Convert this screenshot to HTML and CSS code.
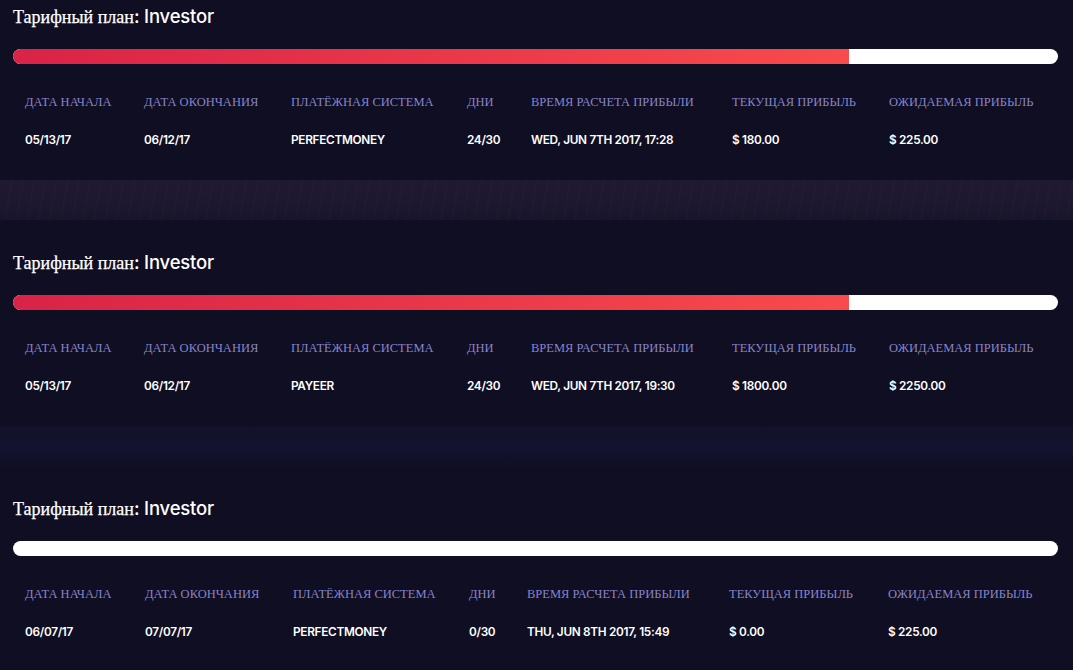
FILE: index.html
```html
<!DOCTYPE html>
<html lang="ru">
<head>
<meta charset="utf-8">
<title>Депозиты</title>
<link rel="stylesheet" href="styles.css">
</head>
<body>
<div class="page">
  <section class="card">
    <h2 class="title"><span class="ru">Тарифный план</span>: Investor</h2>
    <div class="bar"><div class="fill" style="width:80%"></div></div>
    <div class="grid">
      <div class="lbl">Дата начала</div>
      <div class="lbl">Дата окончания</div>
      <div class="lbl">Платёжная система</div>
      <div class="lbl">Дни</div>
      <div class="lbl">Время расчета прибыли</div>
      <div class="lbl">Текущая прибыль</div>
      <div class="lbl">Ожидаемая прибыль</div>
      <div class="val">05/13/17</div>
      <div class="val">06/12/17</div>
      <div class="val">PerfectMoney</div>
      <div class="val">24/30</div>
      <div class="val">Wed, Jun 7th 2017, 17:28</div>
      <div class="val">$ 180.00</div>
      <div class="val">$ 225.00</div>
    </div>
  </section>
  <div class="gap gap-violet"></div>
  <section class="card">
    <h2 class="title"><span class="ru">Тарифный план</span>: Investor</h2>
    <div class="bar"><div class="fill" style="width:80%"></div></div>
    <div class="grid">
      <div class="lbl">Дата начала</div>
      <div class="lbl">Дата окончания</div>
      <div class="lbl">Платёжная система</div>
      <div class="lbl">Дни</div>
      <div class="lbl">Время расчета прибыли</div>
      <div class="lbl">Текущая прибыль</div>
      <div class="lbl">Ожидаемая прибыль</div>
      <div class="val">05/13/17</div>
      <div class="val">06/12/17</div>
      <div class="val">Payeer</div>
      <div class="val">24/30</div>
      <div class="val">Wed, Jun 7th 2017, 19:30</div>
      <div class="val">$ 1800.00</div>
      <div class="val">$ 2250.00</div>
    </div>
  </section>
  <div class="gap gap-blue"></div>
  <section class="card">
    <h2 class="title"><span class="ru">Тарифный план</span>: Investor</h2>
    <div class="bar"><div class="fill" style="width:0%"></div></div>
    <div class="grid grid-alt">
      <div class="lbl">Дата начала</div>
      <div class="lbl">Дата окончания</div>
      <div class="lbl">Платёжная система</div>
      <div class="lbl">Дни</div>
      <div class="lbl">Время расчета прибыли</div>
      <div class="lbl">Текущая прибыль</div>
      <div class="lbl">Ожидаемая прибыль</div>
      <div class="val">06/07/17</div>
      <div class="val">07/07/17</div>
      <div class="val">PerfectMoney</div>
      <div class="val">0/30</div>
      <div class="val">Thu, Jun 8th 2017, 15:49</div>
      <div class="val">$ 0.00</div>
      <div class="val">$ 225.00</div>
    </div>
  </section>
</div>
</body>
</html>
```

FILE: styles.css
```css
html, body {
  margin: 0;
  padding: 0;
  background: #0f0e22;
}

body {
  overflow: hidden;
  font-family: Inter, "Liberation Sans", sans-serif;
  color: #ffffff;
}

.page {
  margin-top: -26px;
}

.card {
  background: #0f0e22;
  padding: 30px 15px 32px 13px;
}

.title {
  margin: 0;
  height: 24px;
  font-family: Inter, "Liberation Sans", sans-serif;
  font-weight: 500;
  font-size: 18.5px;
  line-height: 24px;
  color: #ffffff;
  letter-spacing: -0.2px;
  white-space: nowrap;
}

.title .ru {
  font-family: "Liberation Serif", "DejaVu Serif", serif;
  font-size: 18px;
  font-weight: 400;
  letter-spacing: 0;
  -webkit-text-stroke: 0.25px #ffffff;
}

.bar {
  margin-top: 21px;
  height: 15px;
  background: #ffffff;
  border-radius: 8px;
  overflow: hidden;
}

.fill {
  height: 100%;
  background: linear-gradient(90deg, #d92347 0%, #f84b4c 100%);
}

.grid {
  display: grid;
  grid-template-columns: 119px 147px 176px 64px 201px 157px 1fr;
  grid-auto-rows: 16px;
  row-gap: 22px;
  margin-top: 30px;
  padding-left: 12px;
}

.grid-alt {
  grid-template-columns: 120px 148px 176px 58px 202px 159px 1fr;
}

.lbl {
  font-family: "Liberation Serif", "DejaVu Serif", serif;
  text-transform: uppercase;
  font-size: 12.5px;
  line-height: 16px;
  color: #8884c9;
  white-space: nowrap;
}

.val {
  font-family: Inter, "Liberation Sans", sans-serif;
  text-transform: uppercase;
  font-weight: 600;
  font-size: 11.8px;
  line-height: 16px;
  color: #ffffff;
  white-space: nowrap;
  letter-spacing: -0.3px;
}

.gap {
  height: 40px;
}

.gap-violet {
  background:
    repeating-linear-gradient(100deg, rgba(130, 80, 120, 0.03) 0 2px, transparent 2px 11px),
    linear-gradient(180deg, #1f1a30 0%, #1d1830 55%, #18152b 100%);
}

.gap-blue {
  background: linear-gradient(180deg, #121127 0%, #14132e 40%, #131230 60%, #100f25 100%);
}
```
